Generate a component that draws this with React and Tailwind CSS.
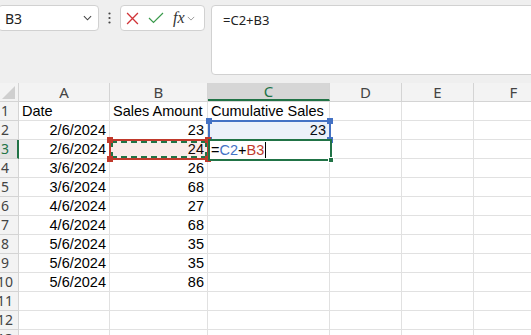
import React from "react";

const cols = [
  { k: "A", w: "w-[91px]" },
  { k: "B", w: "w-[98px]" },
  { k: "C", w: "w-[122px]" },
  { k: "D", w: "w-[72px]" },
  { k: "E", w: "w-[72px]" },
  { k: "F", w: "w-[80px]" },
];

const rows = [
  ["Date", "Sales Amount", "Cumulative Sales"],
  ["2/6/2024", "23", "23"],
  ["2/6/2024", "24", ""],
  ["3/6/2024", "26", ""],
  ["3/6/2024", "68", ""],
  ["4/6/2024", "27", ""],
  ["4/6/2024", "68", ""],
  ["5/6/2024", "35", ""],
  ["5/6/2024", "35", ""],
  ["5/6/2024", "86", ""],
  ["", "", ""],
  ["", "", ""],
  ["", "", ""],
];

function Chevron({ className }) {
  return (
    <svg viewBox="0 0 10 6" className={className} fill="none" stroke="currentColor" strokeWidth="1.2">
      <path d="M1 1l4 4 4-4" />
    </svg>
  );
}

function Toolbar() {
  return (
    <div className="h-[83px] bg-[#efefef] flex items-start pt-[5px] gap-0">
      <div className="-ml-[2px] w-[101px] h-[26px] bg-white border border-[#d1d1d1] rounded-[4px] flex items-center justify-between pl-[6px] pr-[6px]">
        <span className="text-[14px] text-[#222]" style={{ fontFamily: "'Noto Sans', sans-serif" }}>B3</span>
        <Chevron className="w-[9px] h-[6px] text-[#444]" />
      </div>
      <div className="w-[21px] h-[26px] flex items-center justify-center">
        <svg viewBox="0 0 3 12" className="w-[3px] h-[12px]" fill="#444">
          <circle cx="1.5" cy="1.5" r="1.1" />
          <circle cx="1.5" cy="6" r="1.1" />
          <circle cx="1.5" cy="10.5" r="1.1" />
        </svg>
      </div>
      <div className="w-[85px] h-[26px] bg-white border border-[#d1d1d1] rounded-[4px] flex items-center pl-[5px] gap-[9px]">
        <svg viewBox="0 0 12 12" className="w-[13px] h-[13px]" fill="none" stroke="#d13438" strokeWidth="1.2">
          <path d="M1 1l10 10M11 1L1 11" />
        </svg>
        <svg viewBox="0 0 16 12" className="w-[16px] h-[12px]" fill="none" stroke="#3a9a4c" strokeWidth="1.2">
          <path d="M1 6l4.5 4.5L15 1" />
        </svg>
        <div className="flex items-center gap-[2px]">
          <span className="text-[16px] italic text-[#333] leading-none" style={{ fontFamily: "'Liberation Serif', serif" }}>fx</span>
          <Chevron className="w-[8px] h-[5px] text-[#999]" />
        </div>
      </div>
      <div className="ml-[6px] flex-1 -mr-[4px] h-[70px] bg-white border border-[#d1d1d1] rounded-[4px] pl-[11px] pt-[1px]">
        <span className="text-[13px] text-[#222]" style={{ fontFamily: "'Noto Sans', sans-serif" }}>=C2+B3</span>
      </div>
    </div>
  );
}

function Grid() {
  return (
    <div className="relative" style={{ fontFamily: "'Liberation Sans', Arial, sans-serif" }}>
      <div className="flex h-[19px] bg-[#f3f3f3] border-b border-[#d4d4d4]">
        <div className="w-[19px] shrink-0 border-r border-[#d4d4d4] relative overflow-hidden">
          <svg viewBox="0 0 14 14" className="absolute left-[2px] top-[3px] w-[13px] h-[13px]" fill="#cfcfcf">
            <path d="M14 0L14 14L0 14Z" />
          </svg>
        </div>
        {cols.map((c) => (
          <div
            key={c.k}
            className={`${c.w} shrink-0 flex items-center justify-center text-[15px] leading-none border-r border-[#d4d4d4] ${
              c.k === "C" ? "bg-[#d6d6d6] text-[#217346] border-b-2 border-b-[#217346]" : "text-[#444]"
            }`}
            style={{ fontFamily: "'Noto Sans', sans-serif" }}
          >
            {c.k}
          </div>
        ))}
      </div>
      {rows.map((r, i) => {
        const n = i + 1;
        const active = n === 3;
        return (
          <div key={n} className="flex h-[19px]">
            <div
              className={`w-[19px] shrink-0 overflow-hidden flex border-b border-[#d4d4d4] ${
                active ? "bg-[#e2e2e2] border-r-2 border-r-[#217346] text-[#217346]" : "bg-[#f3f3f3] border-r border-[#d4d4d4] text-[#444]"
              }`}
            >
              <div className="w-[26px] -ml-[8px] shrink-0 text-center text-[14px] leading-[18px]" style={{ fontFamily: "'Noto Sans', sans-serif" }}>
                {n}
              </div>
            </div>
            {cols.map((c, j) => {
              const v = r[j] || "";
              const left = n === 1;
              return (
                <div
                  key={c.k}
                  className={`${c.w} shrink-0 border-r border-b border-[#e1e1e1] text-[14.5px] leading-[18px] text-black whitespace-nowrap overflow-visible ${
                    left ? "pl-[3px] text-left" : "pr-[3px] text-right"
                  }`}
                >
                  {v}
                </div>
              );
            })}
          </div>
        );
      })}

      {/* C2 reference highlight */}
      <div className="absolute left-[208px] top-[37px] w-[123px] h-[21px] border-2 border-[#4472c4] bg-[#4472c4]/10">
        <div className="absolute -left-[4px] -top-[4px] w-[6px] h-[6px] bg-[#4472c4]" />
        <div className="absolute -right-[4px] -top-[4px] w-[6px] h-[6px] bg-[#4472c4]" />
        <div className="absolute -left-[4px] -bottom-[4px] w-[6px] h-[6px] bg-[#4472c4]" />
        <div className="absolute -right-[4px] -bottom-[4px] w-[6px] h-[6px] bg-[#4472c4]" />
      </div>

      {/* B3 reference highlight + copy marquee */}
      <div className="absolute left-[109px] top-[56px] w-[100px] h-[21px] border-2 border-[#c0392b] bg-[#c0392b]/10">
        <div className="absolute inset-0 border-2 border-dashed border-[#217346]" />
        <div className="absolute -left-[4px] -top-[4px] w-[6px] h-[6px] bg-[#c0392b]" />
        <div className="absolute -right-[4px] -top-[4px] w-[6px] h-[6px] bg-[#c0392b]" />
        <div className="absolute -left-[4px] -bottom-[4px] w-[6px] h-[6px] bg-[#c0392b]" />
        <div className="absolute -right-[4px] -bottom-[4px] w-[6px] h-[6px] bg-[#c0392b]" />
      </div>

      {/* Active editing cell C3 */}
      <div className="absolute left-[208px] top-[56px] w-[124px] h-[22px] border-2 border-[#217346] bg-white flex items-center pl-[1px]">
        <span className="text-[14.5px] leading-[17px] text-black">=</span>
        <span className="text-[14.5px] leading-[17px] text-[#4472c4]">C2</span>
        <span className="text-[14.5px] leading-[17px] text-black">+</span>
        <span className="text-[14.5px] leading-[17px] text-[#c0392b]">B3</span>
        <span className="w-[1px] h-[16px] bg-black ml-[1px]" />
        <div className="absolute -right-[4px] -bottom-[4px] w-[6px] h-[6px] bg-[#217346] border border-white" />
      </div>
    </div>
  );
}

export default function App() {
  return (
    <div className="w-[531px] h-[335px] overflow-hidden bg-white">
      <Toolbar />
      <Grid />
    </div>
  );
}
